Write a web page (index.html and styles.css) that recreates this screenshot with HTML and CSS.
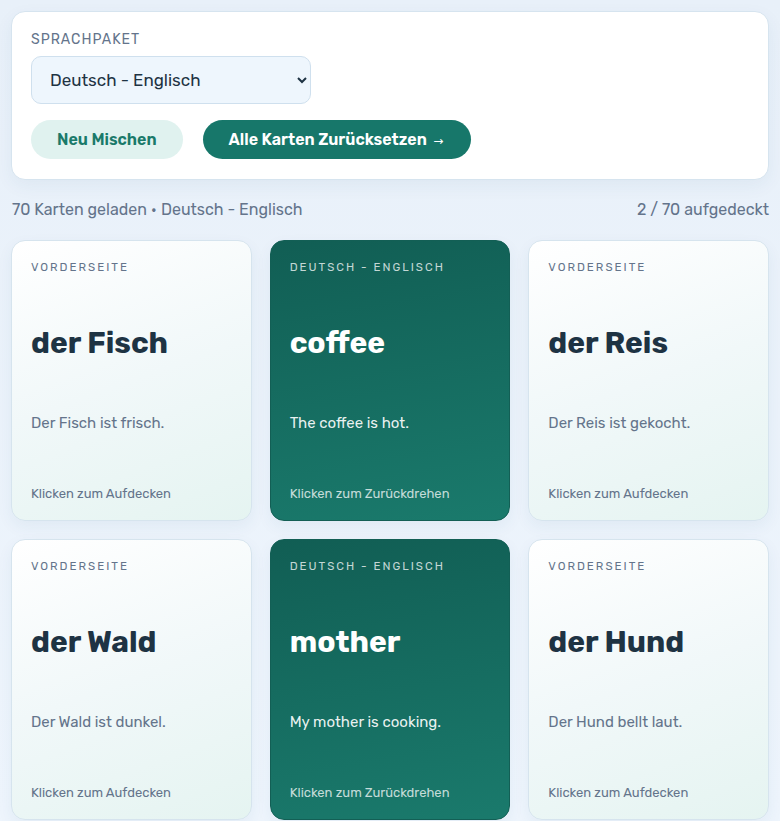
FILE: index.html
```html
<!DOCTYPE html>
<html lang="de">
<head>
	<meta charset="UTF-8">
	<title>Karteikarten</title>
	<link rel="stylesheet" href="styles.css">
</head>
<body>
	<div class="panel">
		<label class="panel-label" for="pack">Sprachpaket</label>
		<select id="pack" class="pack-select">
			<option>Deutsch - Englisch</option>
		</select>
		<div class="actions">
			<button class="btn btn-soft">Neu Mischen</button>
			<button class="btn btn-main">Alle Karten Zurücksetzen <span class="arrow">→</span></button>
		</div>
	</div>

	<div class="status">
		<span>70 Karten geladen • Deutsch - Englisch</span>
		<span>2 / 70 aufgedeckt</span>
	</div>

	<div class="cards">
		<div class="card">
			<div class="card-label">Vorderseite</div>
			<div class="card-word">der Fisch</div>
			<div class="card-sentence">Der Fisch ist frisch.</div>
			<div class="card-hint">Klicken zum Aufdecken</div>
		</div>
		<div class="card flipped">
			<div class="card-label">Deutsch - Englisch</div>
			<div class="card-word">coffee</div>
			<div class="card-sentence">The coffee is hot.</div>
			<div class="card-hint">Klicken zum Zurückdrehen</div>
		</div>
		<div class="card">
			<div class="card-label">Vorderseite</div>
			<div class="card-word">der Reis</div>
			<div class="card-sentence">Der Reis ist gekocht.</div>
			<div class="card-hint">Klicken zum Aufdecken</div>
		</div>
		<div class="card">
			<div class="card-label">Vorderseite</div>
			<div class="card-word">der Wald</div>
			<div class="card-sentence">Der Wald ist dunkel.</div>
			<div class="card-hint">Klicken zum Aufdecken</div>
		</div>
		<div class="card flipped">
			<div class="card-label">Deutsch - Englisch</div>
			<div class="card-word">mother</div>
			<div class="card-sentence">My mother is cooking.</div>
			<div class="card-hint">Klicken zum Zurückdrehen</div>
		</div>
		<div class="card">
			<div class="card-label">Vorderseite</div>
			<div class="card-word">der Hund</div>
			<div class="card-sentence">Der Hund bellt laut.</div>
			<div class="card-hint">Klicken zum Aufdecken</div>
		</div>
	</div>
</body>
</html>
```

FILE: styles.css
```css
* {
	margin: 0;
	padding: 0;
	box-sizing: border-box;
}
body {
	padding: 11px 11px 0;
	font-family: Rubik, Inter, "Noto Sans", sans-serif;
	color: #1e3343;
	background: linear-gradient(180deg, #e8f0f9 0%, #eef5fd 100%);
	min-height: 821px;
}

/* oberes Bedienfeld */
.panel {
	background: #fff;
	border: 1px solid #d6e4ef;
	border-radius: 14px;
	padding: 19px 19px 20px;
	box-shadow: 0 6px 18px rgba(40, 80, 120, 0.06);
}
.panel-label {
	display: block;
	font-size: 14px;
	line-height: 18px;
	letter-spacing: 1px;
	text-transform: uppercase;
	color: #64748b;
	margin-bottom: 7px;
}
.pack-select {
	width: 280px;
	height: 48px;
	padding: 0 14px;
	font: inherit;
	font-size: 17px;
	color: #1e3343;
	background: #eef6fd;
	border: 1px solid #cfe0ee;
	border-radius: 10px;
}
.actions {
	display: flex;
	gap: 20px;
	margin-top: 16px;
}
.btn {
	height: 39px;
	padding: 0 26px;
	border: none;
	border-radius: 20px;
	font: inherit;
	font-size: 16px;
	font-weight: 600;
}
.btn-soft {
	background: #e0f2ef;
	color: #1a7a6a;
}
.btn-main {
	padding-right: 28px;
	background: #17776a;
	color: #fff;
}
.arrow {
	margin-left: 3px;
	font-family: "DejaVu Sans", sans-serif;
	font-weight: normal;
	font-size: 12px;
}

/* Statuszeile */
.status {
	display: flex;
	justify-content: space-between;
	font-size: 16px;
	line-height: 20px;
	color: #64748b;
	margin: 20px 0 20px 1px;
}

/* Kartenraster */
.cards {
	display: grid;
	grid-template-columns: repeat(3, 1fr);
	gap: 18px;
}
.card {
	height: 281px;
	padding: 18px 19px;
	border: 1px solid #d6e4ee;
	border-radius: 14px;
	background: linear-gradient(160deg, #ffffff 0%, #f1f8f9 50%, #e5f4f1 100%);
	box-shadow: 0 6px 16px rgba(40, 80, 120, 0.06);
}
.card-label {
	font-size: 11.5px;
	line-height: 16px;
	letter-spacing: 2px;
	text-transform: uppercase;
	color: #64748b;
}
.card-word {
	margin-top: 50px;
	font-size: 30px;
	line-height: 36px;
	font-weight: 700;
	color: #1e3343;
}
.card-sentence {
	margin-top: 51px;
	font-size: 15px;
	line-height: 22px;
	color: #64748b;
}
.card-hint {
	margin-top: 51px;
	font-size: 13px;
	line-height: 18px;
	color: #64748b;
}
.card.flipped {
	border-color: #135f55;
	background: linear-gradient(170deg, #115e54 0%, #1a7a6c 100%);
}
.flipped .card-label {
	color: rgba(255, 255, 255, 0.75);
}
.flipped .card-word {
	color: #fff;
}
.flipped .card-sentence {
	color: rgba(255, 255, 255, 0.92);
}
.flipped .card-hint {
	color: rgba(255, 255, 255, 0.75);
}
```
